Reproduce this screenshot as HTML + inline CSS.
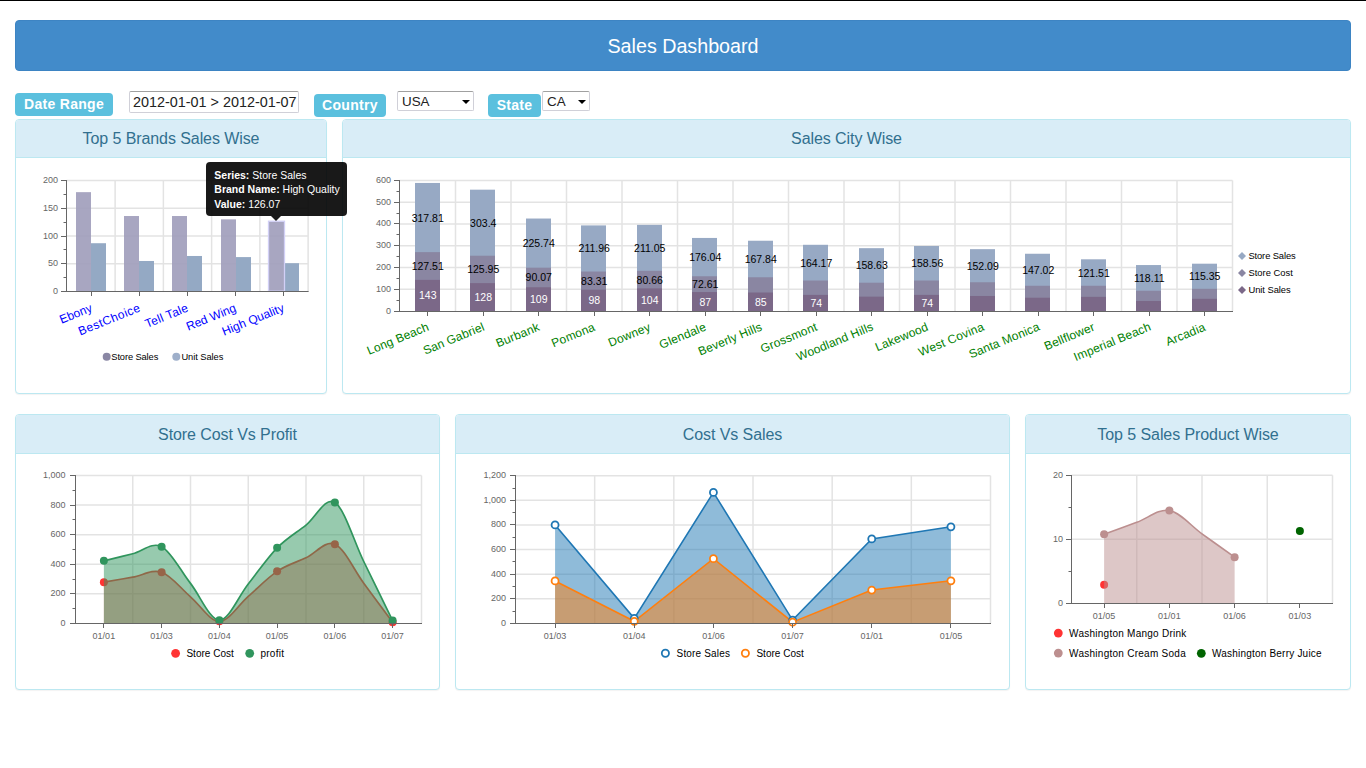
<!DOCTYPE html>
<html><head><meta charset="utf-8"><title>Sales Dashboard</title>
<style>
html,body{margin:0;padding:0;background:#fff;}
body{width:1366px;height:768px;overflow:hidden;position:relative;font-family:"Liberation Sans",sans-serif;}
.topline{position:absolute;left:0;top:0;width:1366px;height:1px;background:#000;}
.hdr{position:absolute;left:15px;top:20px;width:1334px;height:49px;background:#428bca;border:1px solid #3d84c3;border-radius:4px;color:#fff;font-size:19.7px;line-height:50.4px;text-align:center;}
.lbl{position:absolute;background:#5bc0de;color:#fff;font-weight:bold;font-size:14px;letter-spacing:0.3px;border-radius:4px;height:23px;line-height:23px;text-align:center;}
.inp{position:absolute;box-sizing:border-box;background:#fff;border:1px solid #d0d0d8;border-top-color:#a0a0a0;border-radius:2px;color:#222;}
.arrow{position:absolute;width:0;height:0;border-left:4px solid transparent;border-right:4px solid transparent;border-top:4.5px solid #000;}
.panel{position:absolute;box-sizing:border-box;border:1px solid #bce8f1;border-radius:4px;background:#fff;box-shadow:0 1px 1px rgba(0,0,0,.05);}
.ph{background:#d9edf7;border-bottom:1px solid #bce8f1;border-radius:3px 3px 0 0;color:#31708f;font-size:16px;letter-spacing:-0.08px;text-align:center;height:37px;line-height:37px;}
svg.ch{position:absolute;left:0;top:0;}
svg text{font-family:"Liberation Sans",sans-serif;}
.tip{position:absolute;left:206px;top:162px;width:141px;height:54px;background:rgba(0,0,0,.9);border-radius:4px;color:#fff;font-size:10.5px;}
.tip div{position:absolute;left:8.3px;white-space:nowrap;}
.tip b{font-weight:bold;}
.tiparrow{position:absolute;left:271px;top:216px;width:0;height:0;border-left:5px solid transparent;border-right:5px solid transparent;border-top:5px solid rgba(0,0,0,.9);}
</style></head><body>
<div class="topline"></div>
<div class="hdr">Sales Dashboard</div>
<div class="lbl" style="left:15px;top:93px;width:98px;">Date Range</div>
<div class="inp" style="left:129px;top:91px;width:170px;height:22px;font-size:14.4px;line-height:20px;padding-left:3px;">2012-01-01 &gt; 2012-01-07</div>
<div class="lbl" style="left:314px;top:94px;width:72px;">Country</div>
<div class="inp" style="left:397px;top:91px;width:77px;height:20px;font-size:13.4px;line-height:19px;padding-left:4px;">USA</div>
<div class="arrow" style="left:461.8px;top:100px;"></div>
<div class="lbl" style="left:488px;top:94px;width:53px;">State</div>
<div class="inp" style="left:542px;top:91px;width:48px;height:20px;font-size:13.4px;line-height:19px;padding-left:4px;">CA</div>
<div class="arrow" style="left:577.5px;top:100px;"></div>

<div class="panel" style="left:15px;top:119px;width:312px;height:275px;"><div class="ph">Top 5 Brands Sales Wise</div></div>
<div class="panel" style="left:342px;top:119px;width:1009px;height:275px;"><div class="ph">Sales City Wise</div></div>
<div class="panel" style="left:15px;top:414px;width:425px;height:276px;"><div class="ph" style="height:38px;line-height:40.4px;">Store Cost Vs Profit</div></div>
<div class="panel" style="left:455px;top:414px;width:555px;height:276px;"><div class="ph" style="height:38px;line-height:40.4px;">Cost Vs Sales</div></div>
<div class="panel" style="left:1025px;top:414px;width:326px;height:276px;"><div class="ph" style="height:38px;line-height:40.4px;">Top 5 Sales Product Wise</div></div>

<svg class="ch" width="1366" height="768" viewBox="0 0 1366 768">
<line x1="115.12" y1="180.5" x2="115.12" y2="291.5" stroke="#e3e3e3" stroke-width="1.5"/>
<line x1="163.38" y1="180.5" x2="163.38" y2="291.5" stroke="#e3e3e3" stroke-width="1.5"/>
<line x1="211.62" y1="180.5" x2="211.62" y2="291.5" stroke="#e3e3e3" stroke-width="1.5"/>
<line x1="259.88" y1="180.5" x2="259.88" y2="291.5" stroke="#e3e3e3" stroke-width="1.5"/>
<line x1="308.12" y1="180.5" x2="308.12" y2="291.5" stroke="#e3e3e3" stroke-width="1.5"/>
<line x1="66.5" y1="263.75" x2="308.12" y2="263.75" stroke="#e3e3e3" stroke-width="1.5"/>
<line x1="66.5" y1="236" x2="308.12" y2="236" stroke="#e3e3e3" stroke-width="1.5"/>
<line x1="66.5" y1="208.25" x2="308.12" y2="208.25" stroke="#e3e3e3" stroke-width="1.5"/>
<line x1="66.5" y1="180.5" x2="308.12" y2="180.5" stroke="#e3e3e3" stroke-width="1.5"/>
<line x1="66.5" y1="292" x2="66.5" y2="180" stroke="#666" stroke-width="1"/>
<line x1="61" y1="291.5" x2="66.5" y2="291.5" stroke="#666" stroke-width="1"/>
<text x="58" y="291" font-size="9" fill="#666" text-anchor="end" dominant-baseline="central">0</text>
<line x1="61" y1="263.5" x2="66.5" y2="263.5" stroke="#666" stroke-width="1"/>
<text x="58" y="263.25" font-size="9" fill="#666" text-anchor="end" dominant-baseline="central">50</text>
<line x1="61" y1="236.5" x2="66.5" y2="236.5" stroke="#666" stroke-width="1"/>
<text x="58" y="235.5" font-size="9" fill="#666" text-anchor="end" dominant-baseline="central">100</text>
<line x1="61" y1="208.5" x2="66.5" y2="208.5" stroke="#666" stroke-width="1"/>
<text x="58" y="207.75" font-size="9" fill="#666" text-anchor="end" dominant-baseline="central">150</text>
<line x1="61" y1="180.5" x2="66.5" y2="180.5" stroke="#666" stroke-width="1"/>
<text x="58" y="180" font-size="9" fill="#666" text-anchor="end" dominant-baseline="central">200</text>
<line x1="63.5" y1="277.5" x2="66.5" y2="277.5" stroke="#666" stroke-width="1"/>
<line x1="63.5" y1="249.5" x2="66.5" y2="249.5" stroke="#666" stroke-width="1"/>
<line x1="63.5" y1="222.5" x2="66.5" y2="222.5" stroke="#666" stroke-width="1"/>
<line x1="63.5" y1="194.5" x2="66.5" y2="194.5" stroke="#666" stroke-width="1"/>
<rect x="76" y="192.15" width="15" height="99.35" fill="#9e9cba" fill-opacity="0.9"/>
<rect x="91" y="243.22" width="15" height="48.29" fill="#94a9c4"/>
<rect x="124" y="216.02" width="15" height="75.48" fill="#9e9cba" fill-opacity="0.9"/>
<rect x="139" y="260.98" width="15" height="30.53" fill="#94a9c4"/>
<rect x="172" y="216.02" width="15" height="75.48" fill="#9e9cba" fill-opacity="0.9"/>
<rect x="187" y="255.98" width="15" height="35.52" fill="#94a9c4"/>
<rect x="221" y="219.35" width="15" height="72.15" fill="#9e9cba" fill-opacity="0.9"/>
<rect x="236" y="257.09" width="15" height="34.41" fill="#94a9c4"/>
<rect x="269" y="221.53" width="15" height="69.97" fill="#9e9cba" fill-opacity="0.9"/>
<rect x="284" y="263.19" width="15" height="28.31" fill="#94a9c4"/>
<rect x="268.5" y="221.23" width="16" height="69.97" fill="none" stroke="#d2d0f6" stroke-width="1.3"/>
<line x1="61" y1="291.5" x2="308.62" y2="291.5" stroke="#666" stroke-width="1"/>
<line x1="91.5" y1="291.5" x2="91.5" y2="296" stroke="#666" stroke-width="1"/>
<text x="93" y="311" font-size="12" fill="#0000ff" text-anchor="end" textLength="34" lengthAdjust="spacing" transform="rotate(-22 93 311)">Ebony</text>
<line x1="139.5" y1="291.5" x2="139.5" y2="296" stroke="#666" stroke-width="1"/>
<text x="141" y="311" font-size="12" fill="#0000ff" text-anchor="end" textLength="65.5" lengthAdjust="spacing" transform="rotate(-22 141 311)">BestChoice</text>
<line x1="187.5" y1="291.5" x2="187.5" y2="296" stroke="#666" stroke-width="1"/>
<text x="189" y="311" font-size="12" fill="#0000ff" text-anchor="end" textLength="45.3" lengthAdjust="spacing" transform="rotate(-22 189 311)">Tell Tale</text>
<line x1="235.5" y1="291.5" x2="235.5" y2="296" stroke="#666" stroke-width="1"/>
<text x="237" y="311" font-size="12" fill="#0000ff" text-anchor="end" textLength="52.7" lengthAdjust="spacing" transform="rotate(-22 237 311)">Red Wing</text>
<line x1="283.5" y1="291.5" x2="283.5" y2="296" stroke="#666" stroke-width="1"/>
<text x="285" y="311" font-size="12" fill="#0000ff" text-anchor="end" textLength="65.8" lengthAdjust="spacing" transform="rotate(-22 285 311)">High Quality</text>
<circle cx="106.7" cy="356.8" r="4" fill="#8a87a4"/>
<text x="111.3" y="360" font-size="9.3" fill="#000" textLength="47" lengthAdjust="spacing">Store Sales</text>
<circle cx="176.3" cy="356.8" r="4" fill="#9eafca"/>
<text x="181.4" y="360" font-size="9.3" fill="#000" textLength="42" lengthAdjust="spacing">Unit Sales</text>
<line x1="455.5" y1="180.4" x2="455.5" y2="311" stroke="#e3e3e3" stroke-width="1.5"/>
<line x1="511" y1="180.4" x2="511" y2="311" stroke="#e3e3e3" stroke-width="1.5"/>
<line x1="566.5" y1="180.4" x2="566.5" y2="311" stroke="#e3e3e3" stroke-width="1.5"/>
<line x1="622" y1="180.4" x2="622" y2="311" stroke="#e3e3e3" stroke-width="1.5"/>
<line x1="677.5" y1="180.4" x2="677.5" y2="311" stroke="#e3e3e3" stroke-width="1.5"/>
<line x1="733" y1="180.4" x2="733" y2="311" stroke="#e3e3e3" stroke-width="1.5"/>
<line x1="788.5" y1="180.4" x2="788.5" y2="311" stroke="#e3e3e3" stroke-width="1.5"/>
<line x1="844" y1="180.4" x2="844" y2="311" stroke="#e3e3e3" stroke-width="1.5"/>
<line x1="899.5" y1="180.4" x2="899.5" y2="311" stroke="#e3e3e3" stroke-width="1.5"/>
<line x1="955" y1="180.4" x2="955" y2="311" stroke="#e3e3e3" stroke-width="1.5"/>
<line x1="1010.5" y1="180.4" x2="1010.5" y2="311" stroke="#e3e3e3" stroke-width="1.5"/>
<line x1="1066" y1="180.4" x2="1066" y2="311" stroke="#e3e3e3" stroke-width="1.5"/>
<line x1="1121.5" y1="180.4" x2="1121.5" y2="311" stroke="#e3e3e3" stroke-width="1.5"/>
<line x1="1177" y1="180.4" x2="1177" y2="311" stroke="#e3e3e3" stroke-width="1.5"/>
<line x1="1232.5" y1="180.4" x2="1232.5" y2="311" stroke="#e3e3e3" stroke-width="1.5"/>
<line x1="399.5" y1="289.23" x2="1232.5" y2="289.23" stroke="#e3e3e3" stroke-width="1.5"/>
<line x1="399.5" y1="267.47" x2="1232.5" y2="267.47" stroke="#e3e3e3" stroke-width="1.5"/>
<line x1="399.5" y1="245.7" x2="1232.5" y2="245.7" stroke="#e3e3e3" stroke-width="1.5"/>
<line x1="399.5" y1="223.93" x2="1232.5" y2="223.93" stroke="#e3e3e3" stroke-width="1.5"/>
<line x1="399.5" y1="202.17" x2="1232.5" y2="202.17" stroke="#e3e3e3" stroke-width="1.5"/>
<line x1="399.5" y1="180.4" x2="1232.5" y2="180.4" stroke="#e3e3e3" stroke-width="1.5"/>
<line x1="399.5" y1="312" x2="399.5" y2="180" stroke="#666" stroke-width="1"/>
<line x1="394" y1="311.5" x2="399.5" y2="311.5" stroke="#666" stroke-width="1"/>
<text x="391" y="310.5" font-size="9" fill="#666" text-anchor="end" dominant-baseline="central">0</text>
<line x1="394" y1="289.5" x2="399.5" y2="289.5" stroke="#666" stroke-width="1"/>
<text x="391" y="288.73" font-size="9" fill="#666" text-anchor="end" dominant-baseline="central">100</text>
<line x1="394" y1="267.5" x2="399.5" y2="267.5" stroke="#666" stroke-width="1"/>
<text x="391" y="266.97" font-size="9" fill="#666" text-anchor="end" dominant-baseline="central">200</text>
<line x1="394" y1="245.5" x2="399.5" y2="245.5" stroke="#666" stroke-width="1"/>
<text x="391" y="245.2" font-size="9" fill="#666" text-anchor="end" dominant-baseline="central">300</text>
<line x1="394" y1="223.5" x2="399.5" y2="223.5" stroke="#666" stroke-width="1"/>
<text x="391" y="223.43" font-size="9" fill="#666" text-anchor="end" dominant-baseline="central">400</text>
<line x1="394" y1="202.5" x2="399.5" y2="202.5" stroke="#666" stroke-width="1"/>
<text x="391" y="201.67" font-size="9" fill="#666" text-anchor="end" dominant-baseline="central">500</text>
<line x1="394" y1="180.5" x2="399.5" y2="180.5" stroke="#666" stroke-width="1"/>
<text x="391" y="179.9" font-size="9" fill="#666" text-anchor="end" dominant-baseline="central">600</text>
<line x1="396.5" y1="300.5" x2="399.5" y2="300.5" stroke="#666" stroke-width="1"/>
<line x1="396.5" y1="278.5" x2="399.5" y2="278.5" stroke="#666" stroke-width="1"/>
<line x1="396.5" y1="256.5" x2="399.5" y2="256.5" stroke="#666" stroke-width="1"/>
<line x1="396.5" y1="234.5" x2="399.5" y2="234.5" stroke="#666" stroke-width="1"/>
<line x1="396.5" y1="213.5" x2="399.5" y2="213.5" stroke="#666" stroke-width="1"/>
<line x1="396.5" y1="191.5" x2="399.5" y2="191.5" stroke="#666" stroke-width="1"/>
<rect x="415" y="182.94" width="25" height="128.06" fill="#97a9c4"/>
<rect x="415" y="252.12" width="25" height="58.88" fill="#8a86a2"/>
<rect x="415" y="279.87" width="25" height="31.13" fill="#7b6888"/>
<rect x="470" y="189.68" width="25" height="121.32" fill="#97a9c4"/>
<rect x="470" y="255.72" width="25" height="55.28" fill="#8a86a2"/>
<rect x="470" y="283.14" width="25" height="27.86" fill="#7b6888"/>
<rect x="526" y="218.53" width="25" height="92.47" fill="#97a9c4"/>
<rect x="526" y="267.67" width="25" height="43.33" fill="#8a86a2"/>
<rect x="526" y="287.27" width="25" height="23.73" fill="#7b6888"/>
<rect x="581" y="225.4" width="25" height="85.6" fill="#97a9c4"/>
<rect x="581" y="271.53" width="25" height="39.47" fill="#8a86a2"/>
<rect x="581" y="289.67" width="25" height="21.33" fill="#7b6888"/>
<rect x="637" y="224.87" width="25" height="86.13" fill="#97a9c4"/>
<rect x="637" y="270.81" width="25" height="40.19" fill="#8a86a2"/>
<rect x="637" y="288.36" width="25" height="22.64" fill="#7b6888"/>
<rect x="692" y="237.94" width="25" height="73.06" fill="#97a9c4"/>
<rect x="692" y="276.26" width="25" height="34.74" fill="#8a86a2"/>
<rect x="692" y="292.06" width="25" height="18.94" fill="#7b6888"/>
<rect x="748" y="240.73" width="25" height="70.27" fill="#97a9c4"/>
<rect x="748" y="277.26" width="25" height="33.74" fill="#8a86a2"/>
<rect x="748" y="292.5" width="25" height="18.5" fill="#7b6888"/>
<rect x="803" y="244.79" width="25" height="66.21" fill="#97a9c4"/>
<rect x="803" y="280.53" width="25" height="30.47" fill="#8a86a2"/>
<rect x="803" y="294.89" width="25" height="16.11" fill="#7b6888"/>
<rect x="859" y="248.17" width="25" height="62.83" fill="#97a9c4"/>
<rect x="859" y="282.7" width="25" height="28.3" fill="#8a86a2"/>
<rect x="859" y="296.63" width="25" height="14.37" fill="#7b6888"/>
<rect x="914" y="246.01" width="25" height="64.99" fill="#97a9c4"/>
<rect x="914" y="280.53" width="25" height="30.47" fill="#8a86a2"/>
<rect x="914" y="294.89" width="25" height="16.11" fill="#7b6888"/>
<rect x="970" y="249.16" width="25" height="61.84" fill="#97a9c4"/>
<rect x="970" y="282.27" width="25" height="28.73" fill="#8a86a2"/>
<rect x="970" y="295.98" width="25" height="15.02" fill="#7b6888"/>
<rect x="1025" y="253.75" width="25" height="57.25" fill="#97a9c4"/>
<rect x="1025" y="285.75" width="25" height="25.25" fill="#8a86a2"/>
<rect x="1025" y="297.72" width="25" height="13.28" fill="#7b6888"/>
<rect x="1081" y="259.3" width="25" height="51.7" fill="#97a9c4"/>
<rect x="1081" y="285.75" width="25" height="25.25" fill="#8a86a2"/>
<rect x="1081" y="296.85" width="25" height="14.15" fill="#7b6888"/>
<rect x="1136" y="265.05" width="25" height="45.95" fill="#97a9c4"/>
<rect x="1136" y="290.76" width="25" height="20.24" fill="#8a86a2"/>
<rect x="1136" y="300.99" width="25" height="10.01" fill="#7b6888"/>
<rect x="1192" y="263.69" width="25" height="47.31" fill="#97a9c4"/>
<rect x="1192" y="288.8" width="25" height="22.2" fill="#8a86a2"/>
<rect x="1192" y="298.81" width="25" height="12.19" fill="#7b6888"/>
<text x="427.75" y="295.44" font-size="10.5" fill="#fff" text-anchor="middle" dominant-baseline="central">143</text>
<text x="427.75" y="266" font-size="10.5" fill="#000" text-anchor="middle" dominant-baseline="central">127.51</text>
<text x="427.75" y="217.53" font-size="10.5" fill="#000" text-anchor="middle" dominant-baseline="central">317.81</text>
<text x="483.25" y="297.07" font-size="10.5" fill="#fff" text-anchor="middle" dominant-baseline="central">128</text>
<text x="483.25" y="269.43" font-size="10.5" fill="#000" text-anchor="middle" dominant-baseline="central">125.95</text>
<text x="483.25" y="222.7" font-size="10.5" fill="#000" text-anchor="middle" dominant-baseline="central">303.4</text>
<text x="538.75" y="299.14" font-size="10.5" fill="#fff" text-anchor="middle" dominant-baseline="central">109</text>
<text x="538.75" y="277.47" font-size="10.5" fill="#000" text-anchor="middle" dominant-baseline="central">90.07</text>
<text x="538.75" y="243.1" font-size="10.5" fill="#000" text-anchor="middle" dominant-baseline="central">225.74</text>
<text x="594.25" y="300.33" font-size="10.5" fill="#fff" text-anchor="middle" dominant-baseline="central">98</text>
<text x="594.25" y="280.6" font-size="10.5" fill="#000" text-anchor="middle" dominant-baseline="central">83.31</text>
<text x="594.25" y="248.47" font-size="10.5" fill="#000" text-anchor="middle" dominant-baseline="central">211.96</text>
<text x="649.75" y="299.68" font-size="10.5" fill="#fff" text-anchor="middle" dominant-baseline="central">104</text>
<text x="649.75" y="279.58" font-size="10.5" fill="#000" text-anchor="middle" dominant-baseline="central">80.66</text>
<text x="649.75" y="247.84" font-size="10.5" fill="#000" text-anchor="middle" dominant-baseline="central">211.05</text>
<text x="705.25" y="301.53" font-size="10.5" fill="#fff" text-anchor="middle" dominant-baseline="central">87</text>
<text x="705.25" y="284.16" font-size="10.5" fill="#000" text-anchor="middle" dominant-baseline="central">72.61</text>
<text x="705.25" y="257.1" font-size="10.5" fill="#000" text-anchor="middle" dominant-baseline="central">176.04</text>
<text x="760.75" y="301.75" font-size="10.5" fill="#fff" text-anchor="middle" dominant-baseline="central">85</text>
<text x="760.75" y="259" font-size="10.5" fill="#000" text-anchor="middle" dominant-baseline="central">167.84</text>
<text x="816.25" y="302.95" font-size="10.5" fill="#fff" text-anchor="middle" dominant-baseline="central">74</text>
<text x="816.25" y="262.66" font-size="10.5" fill="#000" text-anchor="middle" dominant-baseline="central">164.17</text>
<text x="871.75" y="265.44" font-size="10.5" fill="#000" text-anchor="middle" dominant-baseline="central">158.63</text>
<text x="927.25" y="302.95" font-size="10.5" fill="#fff" text-anchor="middle" dominant-baseline="central">74</text>
<text x="927.25" y="263.27" font-size="10.5" fill="#000" text-anchor="middle" dominant-baseline="central">158.56</text>
<text x="982.75" y="265.72" font-size="10.5" fill="#000" text-anchor="middle" dominant-baseline="central">152.09</text>
<text x="1038.25" y="269.75" font-size="10.5" fill="#000" text-anchor="middle" dominant-baseline="central">147.02</text>
<text x="1093.75" y="272.53" font-size="10.5" fill="#000" text-anchor="middle" dominant-baseline="central">121.51</text>
<text x="1149.25" y="277.9" font-size="10.5" fill="#000" text-anchor="middle" dominant-baseline="central">118.11</text>
<text x="1204.75" y="276.24" font-size="10.5" fill="#000" text-anchor="middle" dominant-baseline="central">115.35</text>
<line x1="394" y1="311.5" x2="1233" y2="311.5" stroke="#666" stroke-width="1"/>
<line x1="427.5" y1="311.5" x2="427.5" y2="316" stroke="#666" stroke-width="1"/>
<text x="364.19" y="330.5" font-size="12" fill="#008000" textLength="65.66" lengthAdjust="spacing" transform="rotate(-22.5 428.25 330.5)">Long Beach</text>
<line x1="483.5" y1="311.5" x2="483.5" y2="316" stroke="#666" stroke-width="1"/>
<text x="420.38" y="330.5" font-size="12" fill="#008000" textLength="64.95" lengthAdjust="spacing" transform="rotate(-22.5 483.75 330.5)">San Gabriel</text>
<line x1="538.5" y1="311.5" x2="538.5" y2="316" stroke="#666" stroke-width="1"/>
<text x="494.55" y="330.5" font-size="12" fill="#008000" textLength="45.81" lengthAdjust="spacing" transform="rotate(-22.5 539.25 330.5)">Burbank</text>
<line x1="594.5" y1="311.5" x2="594.5" y2="316" stroke="#666" stroke-width="1"/>
<text x="550.05" y="330.5" font-size="12" fill="#008000" textLength="45.81" lengthAdjust="spacing" transform="rotate(-22.5 594.75 330.5)">Pomona</text>
<line x1="649.5" y1="311.5" x2="649.5" y2="316" stroke="#666" stroke-width="1"/>
<text x="606.9" y="330.5" font-size="12" fill="#008000" textLength="44.44" lengthAdjust="spacing" transform="rotate(-22.5 650.25 330.5)">Downey</text>
<line x1="705.5" y1="311.5" x2="705.5" y2="316" stroke="#666" stroke-width="1"/>
<text x="657.71" y="330.5" font-size="12" fill="#008000" textLength="49.24" lengthAdjust="spacing" transform="rotate(-22.5 705.75 330.5)">Glendale</text>
<line x1="760.5" y1="311.5" x2="760.5" y2="316" stroke="#666" stroke-width="1"/>
<text x="695.24" y="330.5" font-size="12" fill="#008000" textLength="67.66" lengthAdjust="spacing" transform="rotate(-22.5 761.25 330.5)">Beverly Hills</text>
<line x1="816.5" y1="311.5" x2="816.5" y2="316" stroke="#666" stroke-width="1"/>
<text x="758.07" y="330.5" font-size="12" fill="#008000" textLength="60.15" lengthAdjust="spacing" transform="rotate(-22.5 816.75 330.5)">Grossmont</text>
<line x1="871.5" y1="311.5" x2="871.5" y2="316" stroke="#666" stroke-width="1"/>
<text x="792.43" y="330.5" font-size="12" fill="#008000" textLength="81.81" lengthAdjust="spacing" transform="rotate(-22.5 872.25 330.5)">Woodland Hills</text>
<line x1="927.5" y1="311.5" x2="927.5" y2="316" stroke="#666" stroke-width="1"/>
<text x="873.04" y="330.5" font-size="12" fill="#008000" textLength="56.08" lengthAdjust="spacing" transform="rotate(-22.5 927.75 330.5)">Lakewood</text>
<line x1="982.5" y1="311.5" x2="982.5" y2="316" stroke="#666" stroke-width="1"/>
<text x="915.45" y="330.5" font-size="12" fill="#008000" textLength="69.5" lengthAdjust="spacing" transform="rotate(-22.5 983.25 330.5)">West Covina</text>
<line x1="1038.5" y1="311.5" x2="1038.5" y2="316" stroke="#666" stroke-width="1"/>
<text x="965.37" y="330.5" font-size="12" fill="#008000" textLength="75.21" lengthAdjust="spacing" transform="rotate(-22.5 1038.75 330.5)">Santa Monica</text>
<line x1="1093.5" y1="311.5" x2="1093.5" y2="316" stroke="#666" stroke-width="1"/>
<text x="1042.23" y="330.5" font-size="12" fill="#008000" textLength="53.32" lengthAdjust="spacing" transform="rotate(-22.5 1094.25 330.5)">Bellflower</text>
<line x1="1149.5" y1="311.5" x2="1149.5" y2="316" stroke="#666" stroke-width="1"/>
<text x="1069.71" y="330.5" font-size="12" fill="#008000" textLength="82.04" lengthAdjust="spacing" transform="rotate(-22.5 1149.75 330.5)">Imperial Beach</text>
<line x1="1204.5" y1="311.5" x2="1204.5" y2="316" stroke="#666" stroke-width="1"/>
<text x="1164.56" y="330.5" font-size="12" fill="#008000" textLength="41.71" lengthAdjust="spacing" transform="rotate(-22.5 1205.25 330.5)">Arcadia</text>
<path d="M1242,252L1246,256L1242,260L1238,256Z" fill="#97a9c4"/>
<text x="1248.4" y="255.4" font-size="9.4" fill="#000" dominant-baseline="central" textLength="47.3" lengthAdjust="spacing">Store Sales</text>
<path d="M1242,269L1246,273L1242,277L1238,273Z" fill="#8a86a2"/>
<text x="1248.4" y="272.4" font-size="9.4" fill="#000" dominant-baseline="central" textLength="44.5" lengthAdjust="spacing">Store Cost</text>
<path d="M1242,286L1246,290L1242,294L1238,290Z" fill="#7b6888"/>
<text x="1248.4" y="289.4" font-size="9.4" fill="#000" dominant-baseline="central" textLength="42.3" lengthAdjust="spacing">Unit Sales</text>
<line x1="132.75" y1="475.5" x2="132.75" y2="623.4" stroke="#e3e3e3" stroke-width="1.5"/>
<line x1="190.5" y1="475.5" x2="190.5" y2="623.4" stroke="#e3e3e3" stroke-width="1.5"/>
<line x1="248.25" y1="475.5" x2="248.25" y2="623.4" stroke="#e3e3e3" stroke-width="1.5"/>
<line x1="306" y1="475.5" x2="306" y2="623.4" stroke="#e3e3e3" stroke-width="1.5"/>
<line x1="363.75" y1="475.5" x2="363.75" y2="623.4" stroke="#e3e3e3" stroke-width="1.5"/>
<line x1="421.5" y1="475.5" x2="421.5" y2="623.4" stroke="#e3e3e3" stroke-width="1.5"/>
<line x1="75.5" y1="593.82" x2="421.5" y2="593.82" stroke="#e3e3e3" stroke-width="1.5"/>
<line x1="75.5" y1="564.24" x2="421.5" y2="564.24" stroke="#e3e3e3" stroke-width="1.5"/>
<line x1="75.5" y1="534.66" x2="421.5" y2="534.66" stroke="#e3e3e3" stroke-width="1.5"/>
<line x1="75.5" y1="505.08" x2="421.5" y2="505.08" stroke="#e3e3e3" stroke-width="1.5"/>
<line x1="75.5" y1="475.5" x2="421.5" y2="475.5" stroke="#e3e3e3" stroke-width="1.5"/>
<line x1="75.5" y1="624" x2="75.5" y2="475" stroke="#666" stroke-width="1"/>
<line x1="70" y1="623.5" x2="75.5" y2="623.5" stroke="#666" stroke-width="1"/>
<text x="65.5" y="622.9" font-size="9" fill="#666" text-anchor="end" dominant-baseline="central">0</text>
<line x1="70" y1="593.5" x2="75.5" y2="593.5" stroke="#666" stroke-width="1"/>
<text x="65.5" y="593.32" font-size="9" fill="#666" text-anchor="end" dominant-baseline="central">200</text>
<line x1="70" y1="564.5" x2="75.5" y2="564.5" stroke="#666" stroke-width="1"/>
<text x="65.5" y="563.74" font-size="9" fill="#666" text-anchor="end" dominant-baseline="central">400</text>
<line x1="70" y1="534.5" x2="75.5" y2="534.5" stroke="#666" stroke-width="1"/>
<text x="65.5" y="534.16" font-size="9" fill="#666" text-anchor="end" dominant-baseline="central">600</text>
<line x1="70" y1="505.5" x2="75.5" y2="505.5" stroke="#666" stroke-width="1"/>
<text x="65.5" y="504.58" font-size="9" fill="#666" text-anchor="end" dominant-baseline="central">800</text>
<line x1="70" y1="475.5" x2="75.5" y2="475.5" stroke="#666" stroke-width="1"/>
<text x="65.5" y="475" font-size="9" fill="#666" text-anchor="end" dominant-baseline="central">1,000</text>
<line x1="72.5" y1="608.5" x2="75.5" y2="608.5" stroke="#666" stroke-width="1"/>
<line x1="72.5" y1="579.5" x2="75.5" y2="579.5" stroke="#666" stroke-width="1"/>
<line x1="72.5" y1="549.5" x2="75.5" y2="549.5" stroke="#666" stroke-width="1"/>
<line x1="72.5" y1="519.5" x2="75.5" y2="519.5" stroke="#666" stroke-width="1"/>
<line x1="72.5" y1="490.5" x2="75.5" y2="490.5" stroke="#666" stroke-width="1"/>
<path d="M103.88,582.14C108.69,581.31,123.12,578.83,132.75,577.18C142.38,575.53,152,568.96,161.62,572.23C171.25,575.49,180.88,588.59,190.5,596.78C200.12,604.96,209.75,621.4,219.38,621.33C229,621.26,238.62,604.67,248.25,596.33C257.88,588,267.5,577.76,277.12,571.34C286.75,564.92,296.38,562.32,306,557.81C315.62,553.3,325.25,540.03,334.88,544.27C344.5,548.51,354.12,570.25,363.75,583.25C373.38,596.24,387.81,615.72,392.62,622.22L392.62,623.4L103.88,623.4Z" fill="#ee3a33" fill-opacity="0.44"/>
<path d="M103.88,582.14C108.69,581.31,123.12,578.83,132.75,577.18C142.38,575.53,152,568.96,161.62,572.23C171.25,575.49,180.88,588.59,190.5,596.78C200.12,604.96,209.75,621.4,219.38,621.33C229,621.26,238.62,604.67,248.25,596.33C257.88,588,267.5,577.76,277.12,571.34C286.75,564.92,296.38,562.32,306,557.81C315.62,553.3,325.25,540.03,334.88,544.27C344.5,548.51,354.12,570.25,363.75,583.25C373.38,596.24,387.81,615.72,392.62,622.22" fill="none" stroke="#ee3a33" stroke-width="1.7"/>
<circle cx="103.88" cy="582.14" r="4" fill="#ff3333"/>
<circle cx="161.62" cy="572.23" r="4" fill="#ff3333"/>
<circle cx="219.38" cy="621.33" r="4" fill="#ff3333"/>
<circle cx="277.12" cy="571.34" r="4" fill="#ff3333"/>
<circle cx="334.88" cy="544.27" r="4" fill="#ff3333"/>
<circle cx="392.62" cy="622.22" r="4" fill="#ff3333"/>
<path d="M103.88,560.84C108.69,559.66,123.12,556.11,132.75,553.74C142.38,551.37,152,541.7,161.62,546.64C171.25,551.58,180.88,571.14,190.5,583.39C200.12,595.64,209.75,620.05,219.38,620.15C229,620.24,238.62,596.04,248.25,583.98C257.88,571.93,267.5,557.63,277.12,547.82C286.75,538.01,296.38,532.69,306,525.12C315.62,517.55,325.25,496.35,334.88,502.42C344.5,508.48,354.12,541.81,363.75,561.5C373.38,581.2,387.81,610.74,392.62,620.59L392.62,623.4L103.88,623.4Z" fill="#30955d" fill-opacity="0.5"/>
<path d="M103.88,560.84C108.69,559.66,123.12,556.11,132.75,553.74C142.38,551.37,152,541.7,161.62,546.64C171.25,551.58,180.88,571.14,190.5,583.39C200.12,595.64,209.75,620.05,219.38,620.15C229,620.24,238.62,596.04,248.25,583.98C257.88,571.93,267.5,557.63,277.12,547.82C286.75,538.01,296.38,532.69,306,525.12C315.62,517.55,325.25,496.35,334.88,502.42C344.5,508.48,354.12,541.81,363.75,561.5C373.38,581.2,387.81,610.74,392.62,620.59" fill="none" stroke="#30955d" stroke-width="1.7"/>
<circle cx="103.88" cy="560.84" r="4" fill="#30955d"/>
<circle cx="161.62" cy="546.64" r="4" fill="#30955d"/>
<circle cx="219.38" cy="620.15" r="4" fill="#30955d"/>
<circle cx="277.12" cy="547.82" r="4" fill="#30955d"/>
<circle cx="334.88" cy="502.42" r="4" fill="#30955d"/>
<circle cx="392.62" cy="620.59" r="4" fill="#30955d"/>
<line x1="70" y1="623.5" x2="422" y2="623.5" stroke="#666" stroke-width="1"/>
<line x1="103.5" y1="623.5" x2="103.5" y2="628" stroke="#666" stroke-width="1"/>
<text x="103.88" y="638.6" font-size="9" fill="#666" text-anchor="middle">01/01</text>
<line x1="161.5" y1="623.5" x2="161.5" y2="628" stroke="#666" stroke-width="1"/>
<text x="161.62" y="638.6" font-size="9" fill="#666" text-anchor="middle">01/03</text>
<line x1="219.5" y1="623.5" x2="219.5" y2="628" stroke="#666" stroke-width="1"/>
<text x="219.38" y="638.6" font-size="9" fill="#666" text-anchor="middle">01/04</text>
<line x1="277.5" y1="623.5" x2="277.5" y2="628" stroke="#666" stroke-width="1"/>
<text x="277.12" y="638.6" font-size="9" fill="#666" text-anchor="middle">01/05</text>
<line x1="334.5" y1="623.5" x2="334.5" y2="628" stroke="#666" stroke-width="1"/>
<text x="334.88" y="638.6" font-size="9" fill="#666" text-anchor="middle">01/06</text>
<line x1="392.5" y1="623.5" x2="392.5" y2="628" stroke="#666" stroke-width="1"/>
<text x="392.62" y="638.6" font-size="9" fill="#666" text-anchor="middle">01/07</text>
<circle cx="175.6" cy="653.3" r="4.4" fill="#f33"/>
<text x="186.4" y="656.8" font-size="10" fill="#000" textLength="47.4" lengthAdjust="spacing">Store Cost</text>
<circle cx="249.7" cy="653.3" r="4.4" fill="#30955d"/>
<text x="260.4" y="656.8" font-size="10" fill="#000" textLength="23.6" lengthAdjust="spacing">profit</text>
<line x1="594.67" y1="475.7" x2="594.67" y2="623.4" stroke="#e3e3e3" stroke-width="1.5"/>
<line x1="673.83" y1="475.7" x2="673.83" y2="623.4" stroke="#e3e3e3" stroke-width="1.5"/>
<line x1="753" y1="475.7" x2="753" y2="623.4" stroke="#e3e3e3" stroke-width="1.5"/>
<line x1="832.17" y1="475.7" x2="832.17" y2="623.4" stroke="#e3e3e3" stroke-width="1.5"/>
<line x1="911.33" y1="475.7" x2="911.33" y2="623.4" stroke="#e3e3e3" stroke-width="1.5"/>
<line x1="990.5" y1="475.7" x2="990.5" y2="623.4" stroke="#e3e3e3" stroke-width="1.5"/>
<line x1="515.5" y1="598.78" x2="990.5" y2="598.78" stroke="#e3e3e3" stroke-width="1.5"/>
<line x1="515.5" y1="574.17" x2="990.5" y2="574.17" stroke="#e3e3e3" stroke-width="1.5"/>
<line x1="515.5" y1="549.55" x2="990.5" y2="549.55" stroke="#e3e3e3" stroke-width="1.5"/>
<line x1="515.5" y1="524.93" x2="990.5" y2="524.93" stroke="#e3e3e3" stroke-width="1.5"/>
<line x1="515.5" y1="500.32" x2="990.5" y2="500.32" stroke="#e3e3e3" stroke-width="1.5"/>
<line x1="515.5" y1="475.7" x2="990.5" y2="475.7" stroke="#e3e3e3" stroke-width="1.5"/>
<line x1="515.5" y1="624" x2="515.5" y2="475" stroke="#666" stroke-width="1"/>
<line x1="510" y1="623.5" x2="515.5" y2="623.5" stroke="#666" stroke-width="1"/>
<text x="506" y="622.9" font-size="9" fill="#666" text-anchor="end" dominant-baseline="central">0</text>
<line x1="510" y1="598.5" x2="515.5" y2="598.5" stroke="#666" stroke-width="1"/>
<text x="506" y="598.28" font-size="9" fill="#666" text-anchor="end" dominant-baseline="central">200</text>
<line x1="510" y1="574.5" x2="515.5" y2="574.5" stroke="#666" stroke-width="1"/>
<text x="506" y="573.67" font-size="9" fill="#666" text-anchor="end" dominant-baseline="central">400</text>
<line x1="510" y1="549.5" x2="515.5" y2="549.5" stroke="#666" stroke-width="1"/>
<text x="506" y="549.05" font-size="9" fill="#666" text-anchor="end" dominant-baseline="central">600</text>
<line x1="510" y1="524.5" x2="515.5" y2="524.5" stroke="#666" stroke-width="1"/>
<text x="506" y="524.43" font-size="9" fill="#666" text-anchor="end" dominant-baseline="central">800</text>
<line x1="510" y1="500.5" x2="515.5" y2="500.5" stroke="#666" stroke-width="1"/>
<text x="506" y="499.82" font-size="9" fill="#666" text-anchor="end" dominant-baseline="central">1,000</text>
<line x1="510" y1="475.5" x2="515.5" y2="475.5" stroke="#666" stroke-width="1"/>
<text x="506" y="475.2" font-size="9" fill="#666" text-anchor="end" dominant-baseline="central">1,200</text>
<line x1="512.5" y1="611.5" x2="515.5" y2="611.5" stroke="#666" stroke-width="1"/>
<line x1="512.5" y1="586.5" x2="515.5" y2="586.5" stroke="#666" stroke-width="1"/>
<line x1="512.5" y1="561.5" x2="515.5" y2="561.5" stroke="#666" stroke-width="1"/>
<line x1="512.5" y1="537.5" x2="515.5" y2="537.5" stroke="#666" stroke-width="1"/>
<line x1="512.5" y1="512.5" x2="515.5" y2="512.5" stroke="#666" stroke-width="1"/>
<line x1="512.5" y1="488.5" x2="515.5" y2="488.5" stroke="#666" stroke-width="1"/>
<path d="M555.08,524.93L634.25,618.35L713.42,492.44L792.58,620.08L871.75,538.96L950.92,526.78L950.92,623.4L555.08,623.4Z" fill="#1f77b4" fill-opacity="0.5"/>
<path d="M555.08,524.93L634.25,618.35L713.42,492.44L792.58,620.08L871.75,538.96L950.92,526.78" fill="none" stroke="#1f77b4" stroke-width="1.6"/>
<path d="M555.08,580.94L634.25,621.31L713.42,558.66L792.58,622.17L871.75,590.04L950.92,580.81L950.92,623.4L555.08,623.4Z" fill="#ff7f0e" fill-opacity="0.5"/>
<path d="M555.08,580.94L634.25,621.31L713.42,558.66L792.58,622.17L871.75,590.04L950.92,580.81" fill="none" stroke="#ff7f0e" stroke-width="1.6"/>
<circle cx="555.08" cy="524.93" r="3.5" fill="#fff" stroke="#1f77b4" stroke-width="1.8"/>
<circle cx="634.25" cy="618.35" r="3.5" fill="#fff" stroke="#1f77b4" stroke-width="1.8"/>
<circle cx="713.42" cy="492.44" r="3.5" fill="#fff" stroke="#1f77b4" stroke-width="1.8"/>
<circle cx="792.58" cy="620.08" r="3.5" fill="#fff" stroke="#1f77b4" stroke-width="1.8"/>
<circle cx="871.75" cy="538.96" r="3.5" fill="#fff" stroke="#1f77b4" stroke-width="1.8"/>
<circle cx="950.92" cy="526.78" r="3.5" fill="#fff" stroke="#1f77b4" stroke-width="1.8"/>
<circle cx="555.08" cy="580.94" r="3.5" fill="#fff" stroke="#ff7f0e" stroke-width="1.8"/>
<circle cx="634.25" cy="621.31" r="3.5" fill="#fff" stroke="#ff7f0e" stroke-width="1.8"/>
<circle cx="713.42" cy="558.66" r="3.5" fill="#fff" stroke="#ff7f0e" stroke-width="1.8"/>
<circle cx="792.58" cy="622.17" r="3.5" fill="#fff" stroke="#ff7f0e" stroke-width="1.8"/>
<circle cx="871.75" cy="590.04" r="3.5" fill="#fff" stroke="#ff7f0e" stroke-width="1.8"/>
<circle cx="950.92" cy="580.81" r="3.5" fill="#fff" stroke="#ff7f0e" stroke-width="1.8"/>
<line x1="510" y1="623.5" x2="991" y2="623.5" stroke="#666" stroke-width="1"/>
<line x1="555.5" y1="623.5" x2="555.5" y2="628" stroke="#666" stroke-width="1"/>
<text x="555.08" y="638.6" font-size="9" fill="#666" text-anchor="middle">01/03</text>
<line x1="634.5" y1="623.5" x2="634.5" y2="628" stroke="#666" stroke-width="1"/>
<text x="634.25" y="638.6" font-size="9" fill="#666" text-anchor="middle">01/04</text>
<line x1="713.5" y1="623.5" x2="713.5" y2="628" stroke="#666" stroke-width="1"/>
<text x="713.42" y="638.6" font-size="9" fill="#666" text-anchor="middle">01/06</text>
<line x1="792.5" y1="623.5" x2="792.5" y2="628" stroke="#666" stroke-width="1"/>
<text x="792.58" y="638.6" font-size="9" fill="#666" text-anchor="middle">01/07</text>
<line x1="871.5" y1="623.5" x2="871.5" y2="628" stroke="#666" stroke-width="1"/>
<text x="871.75" y="638.6" font-size="9" fill="#666" text-anchor="middle">01/01</text>
<line x1="950.5" y1="623.5" x2="950.5" y2="628" stroke="#666" stroke-width="1"/>
<text x="950.92" y="638.6" font-size="9" fill="#666" text-anchor="middle">01/05</text>
<circle cx="665.4" cy="653.3" r="3.6" fill="#fff" stroke="#1f77b4" stroke-width="1.8"/>
<text x="676.6" y="656.8" font-size="10" fill="#000" textLength="53.3" lengthAdjust="spacing">Store Sales</text>
<circle cx="745.4" cy="653.3" r="3.6" fill="#fff" stroke="#ff7f0e" stroke-width="1.8"/>
<text x="756.4" y="656.8" font-size="10" fill="#000" textLength="47.5" lengthAdjust="spacing">Store Cost</text>
<line x1="1136.75" y1="475.3" x2="1136.75" y2="603.3" stroke="#e3e3e3" stroke-width="1.5"/>
<line x1="1202" y1="475.3" x2="1202" y2="603.3" stroke="#e3e3e3" stroke-width="1.5"/>
<line x1="1267.25" y1="475.3" x2="1267.25" y2="603.3" stroke="#e3e3e3" stroke-width="1.5"/>
<line x1="1332.5" y1="475.3" x2="1332.5" y2="603.3" stroke="#e3e3e3" stroke-width="1.5"/>
<line x1="1071.5" y1="539.3" x2="1332.5" y2="539.3" stroke="#e3e3e3" stroke-width="1.5"/>
<line x1="1071.5" y1="475.3" x2="1332.5" y2="475.3" stroke="#e3e3e3" stroke-width="1.5"/>
<line x1="1071.5" y1="604" x2="1071.5" y2="475" stroke="#666" stroke-width="1"/>
<line x1="1066" y1="603.5" x2="1071.5" y2="603.5" stroke="#666" stroke-width="1"/>
<text x="1063" y="602.8" font-size="9" fill="#666" text-anchor="end" dominant-baseline="central">0</text>
<line x1="1066" y1="539.5" x2="1071.5" y2="539.5" stroke="#666" stroke-width="1"/>
<text x="1063" y="538.8" font-size="9" fill="#666" text-anchor="end" dominant-baseline="central">10</text>
<line x1="1066" y1="475.5" x2="1071.5" y2="475.5" stroke="#666" stroke-width="1"/>
<text x="1063" y="474.8" font-size="9" fill="#666" text-anchor="end" dominant-baseline="central">20</text>
<line x1="1068.5" y1="571.5" x2="1071.5" y2="571.5" stroke="#666" stroke-width="1"/>
<line x1="1068.5" y1="507.5" x2="1071.5" y2="507.5" stroke="#666" stroke-width="1"/>
<circle cx="1104.12" cy="584.74" r="4" fill="#f33"/>
<path d="M1104.12,534.18C1109.56,532.21,1125.88,526.29,1136.75,522.34C1147.62,518.39,1158.5,508.58,1169.38,510.5C1180.25,512.42,1191.12,526.07,1202,533.86C1212.88,541.65,1229.19,553.33,1234.62,557.22L1234.62,603.3L1104.12,603.3Z" fill="#bc8f8f" fill-opacity="0.5"/>
<path d="M1104.12,534.18C1109.56,532.21,1125.88,526.29,1136.75,522.34C1147.62,518.39,1158.5,508.58,1169.38,510.5C1180.25,512.42,1191.12,526.07,1202,533.86C1212.88,541.65,1229.19,553.33,1234.62,557.22" fill="none" stroke="#bc8f8f" stroke-width="1.6"/>
<circle cx="1104.12" cy="534.18" r="4" fill="#bc8f8f"/>
<circle cx="1169.38" cy="510.5" r="4" fill="#bc8f8f"/>
<circle cx="1234.62" cy="557.22" r="4" fill="#bc8f8f"/>
<circle cx="1299.88" cy="530.98" r="4" fill="#006400"/>
<line x1="1066" y1="603.5" x2="1333" y2="603.5" stroke="#666" stroke-width="1"/>
<line x1="1104.5" y1="603.5" x2="1104.5" y2="608" stroke="#666" stroke-width="1"/>
<text x="1104.12" y="618.5" font-size="9" fill="#666" text-anchor="middle">01/05</text>
<line x1="1169.5" y1="603.5" x2="1169.5" y2="608" stroke="#666" stroke-width="1"/>
<text x="1169.38" y="618.5" font-size="9" fill="#666" text-anchor="middle">01/01</text>
<line x1="1234.5" y1="603.5" x2="1234.5" y2="608" stroke="#666" stroke-width="1"/>
<text x="1234.62" y="618.5" font-size="9" fill="#666" text-anchor="middle">01/06</text>
<line x1="1299.5" y1="603.5" x2="1299.5" y2="608" stroke="#666" stroke-width="1"/>
<text x="1299.88" y="618.5" font-size="9" fill="#666" text-anchor="middle">01/03</text>
<circle cx="1058.3" cy="633.1" r="4.4" fill="#f33"/>
<text x="1069.1" y="636.6" font-size="10" fill="#000" textLength="117.2" lengthAdjust="spacing">Washington Mango Drink</text>
<circle cx="1058.3" cy="653.1" r="4.4" fill="#bc8f8f"/>
<text x="1069.1" y="656.6" font-size="10" fill="#000" textLength="116.6" lengthAdjust="spacing">Washington Cream Soda</text>
<circle cx="1201.3" cy="653.3" r="4.4" fill="#006400"/>
<text x="1211.9" y="656.6" font-size="10" fill="#000" textLength="109.7" lengthAdjust="spacing">Washington Berry Juice</text>
</svg>
<div class="tip">
<div style="top:6.5px;"><b>Series:</b> Store Sales</div>
<div style="top:21px;"><b>Brand Name:</b> High Quality</div>
<div style="top:36px;"><b>Value:</b> 126.07</div>
</div>
<div class="tiparrow"></div>
</body></html>
